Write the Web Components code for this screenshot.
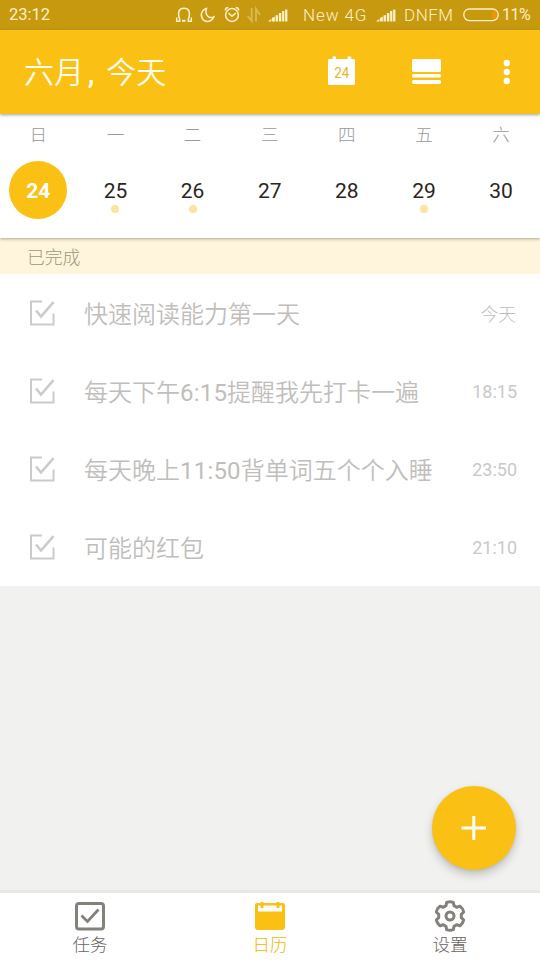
<!DOCTYPE html>
<html lang="zh-CN">
<head>
<meta charset="utf-8">
<title>日历</title>
<style>
html,body{margin:0;height:100%}
body{font-family:Roboto,"Noto Sans CJK SC",sans-serif;font-weight:350}
</style>
</head>
<body>
<calendar-app></calendar-app>
<script>
function define(name, html, fill) {
  customElements.define(name, class extends HTMLElement {
    connectedCallback() {
      if (this.shadowRoot) return;
      const root = this.attachShadow({ mode: 'open' });
      root.innerHTML = html;
      if (fill) fill(root, this);
    }
  });
}

define('signal-bars', `<style>:host{display:block;width:20px;height:14px;line-height:0}svg{display:block}</style><svg width="20" height="14" viewBox="0 0 20 14" fill="#fff0c8"><path d="M0 13.500L3.300 10.800V13.500z"/><path d="M4 13.500V10l2.800-1.500V13.500z"/><path d="M7.600 13.500V7.200h2.400V13.500z"/><path d="M10.900 13.500V5h2.400V13.500z"/><path d="M14.100 13.500V3h2.200V13.500z"/><path d="M17.100 13.500V1.500h2.300V13.500z"/></svg>`);

define('status-bar', `<style>
:host{display:flex;height:30px;background:#c6990f;color:#fff0c8;font-size:16.5px;font-weight:400;align-items:center;padding-left:9px;box-sizing:border-box;white-space:nowrap;line-height:32px}
span{display:block;flex:none}svg,signal-bars{display:block;flex:none}
.time{width:166px;letter-spacing:0;line-height:34px}.net{width:74px;margin-left:15px;font-size:17px;letter-spacing:.9px;font-weight:350}.op{width:59px;margin-left:8px;font-size:17px;letter-spacing:.5px;font-weight:350}.pct{font-size:16px;letter-spacing:-.5px;margin-left:3px;line-height:34px}
</style>
<span class="time">23:12</span>
<svg width="88" height="30" viewBox="175 0 88 30" fill="none" stroke="#fff0c8" stroke-width="1.5">
<path d="M179.300 18.500C177.500 12 179 8.200 184 8.200s6.500 3.800 4.700 10.300"/><path d="M176.700 17.500v3.800h3v-3M191.300 17.500v3.800h-3v-3"/><path d="M182 20.800h3.500" stroke-width="2"/>
<path d="M206.500 8.500C201 10 200 16 203 19.500 206.500 23 212 21.500 213.800 17 209 19 204.500 15 206.500 8.500z"/>
<circle cx="232" cy="15" r="6.400"/><path d="M228.500 13l3.500 3.200 4-3.200M225.300 10.500c0-2 1.400-3 3-3M238.700 10.500c0-2-1.400-3-3-3"/>
<g stroke="#dbb850" stroke-width="1.900"><path d="M251.700 8v13l-4-5M256 21.500V9l4 6"/></g></svg>
<signal-bars style="margin-left:5px"></signal-bars><span class="net">New 4G</span><signal-bars style="margin-left:-1px"></signal-bars><span class="op">DNFM</span>
<svg width="36" height="14" viewBox="0 0 36 14"><path d="M29 2h2.500Q34.500 2 34.500 7t-3 5H29z" fill="#e9960a"/><rect x=".8" y="1" width="34.400" height="11.600" rx="5.500" fill="none" stroke="#fff0c8" stroke-width="1.300"/></svg>
<span class="pct">11%</span>`);

define('app-header', `<style>
:host{display:flex;height:84px;background:#fac013;color:#fffdf0;position:relative;z-index:2;box-shadow:0 1px 3px rgba(70,90,110,.55);justify-content:space-between;padding:0 0 0 24px;box-sizing:border-box}
.title{display:flex;font-size:30px;line-height:86px;letter-spacing:-.1px}
.comma{width:22.500px;text-indent:4px;font-weight:500}
svg{display:block}
text{font:400 15px Roboto,sans-serif;fill:#e8b51d}
</style>
<div class="title"><span>六月</span><span class="comma">,</span><span>今天</span></div>
<svg width="240" height="84" viewBox="300 30 240 84" fill="#fff">
<path d="M329 59h3.500v-1.500q0-1.200 1.800-1.200t1.800 1.200V59h11.500v-1.500q0-1.200 1.800-1.200t1.800 1.200V59H354q1 0 1 1v24q0 1-1 1h-25q-1 0-1-1V60q0-1 1-1z"/><text x="341.800" y="78.200" text-anchor="middle" textLength="15" lengthAdjust="spacingAndGlyphs">24</text>
<rect x="412" y="59" width="29" height="13" rx="1.500"/><rect x="412" y="74" width="29" height="3.500" rx="1.500"/><rect x="412" y="80" width="29" height="4" rx="1.500"/>
<circle cx="506.800" cy="63" r="3.200"/><circle cx="506.800" cy="72" r="3.200"/><circle cx="506.800" cy="81" r="3.200"/></svg>`);

define('week-day', `<style>
:host{display:flex;flex-direction:column;align-items:center;width:77.140px;flex:none}
.name{font-size:17.500px;line-height:27px;height:26px;color:#999;font-weight:300}
.num{width:58px;height:58px;border-radius:50%;margin-top:13px;display:flex;flex-direction:column;align-items:center;color:#2b2520;font-size:21px;font-weight:400;line-height:61px;letter-spacing:-.1px}
:host([selected]) .num{background:#fac013;color:#fff;font-weight:700}
i{display:none;width:8px;height:8px;border-radius:50%;background:#fde3a0;margin-top:-14px}
:host([busy]) i{display:block}
</style><div class="name"><slot></slot></div><div class="num"></div><i></i>`,
(root, el) => { root.querySelector('.num').textContent = el.getAttribute('date'); });

define('week-strip', `<style>
:host{display:flex;height:124px;padding-top:8px;box-sizing:border-box;background:#fff;position:relative;z-index:1;box-shadow:0 1px 3px rgba(100,80,70,.5)}
.in{display:flex;width:540px;margin-left:-.3px}
</style><div class="in"><slot></slot></div>`);

define('section-head', `<style>:host{display:block;height:36px;background:#fef5dc;color:#a2957b;font-size:17.800px;line-height:40px;padding-left:27px;box-sizing:border-box;font-weight:300}</style><slot></slot>`);

define('task-row', `<style>
:host{display:flex;height:78px;align-items:center;background:#fff;color:#bfbebc;padding:0 23px 0 28px;font-size:24px}
svg{display:block;flex:none}.t{flex:1;padding-left:28px;line-height:78px;padding-top:3px;white-space:nowrap}
b{font-weight:400;letter-spacing:.2px}
.w{font-size:18px;color:#c9c9c9;padding-top:1px;font-weight:400}
.w.word{font-weight:300;color:#bdbdbd;font-size:17.800px;padding-right:1px;padding-top:0}
</style><svg width="28" height="28" viewBox="0 0 28 28" fill="none" stroke="#cbcbcb" stroke-width="2"><path d="M14 2.500H3V25.500h22.500V14.500"/><path d="M8 11.500l5 6L25.500 3.200" stroke-width="2.600"/></svg><span class="t"></span><span class="w"></span>`,
(root, el) => {
  const when = el.getAttribute('when');
  const w = root.querySelector('.w');
  w.textContent = when;
  w.classList.toggle('word', !/\d/.test(when));
  root.querySelector('.t').innerHTML = el.getAttribute('label').replace(/[\d:]+/g, '<b>$&</b>');
});

define('add-button', `<style>
:host{position:absolute;left:432px;top:786px;width:84px;height:84px;border-radius:50%;background:#fac013;box-shadow:0 5px 10px rgba(0,0,0,.2),0 1px 3px rgba(0,0,0,.08)}svg{display:block}
</style><svg width="84" height="84" stroke="#fff" stroke-width="3"><path d="M29.500 42h24.500M41.800 30v24"/></svg>`);

define('nav-item', `<style>
:host{display:flex;flex-direction:column;align-items:center;flex:1;color:#69645f;font-size:17.500px;font-weight:300;line-height:24px;padding-top:7px}
:host([active]){color:#f7b500}
svg{display:block;margin-bottom:1px}
</style><svg width="34" height="32" viewBox="0 0 34 32"></svg><slot></slot>`,
(root, el) => {
  const icons = {
    tasks: '<g fill="none" stroke="#84807b" stroke-width="3"><rect x="3.500" y="3.500" width="27" height="25.500" rx="2.500"/><path d="M8.500 15.500l6 6L25.500 9.500" stroke-width="2.800"/></g>',
    calendar: '<path d="M4 3h3.500V2h3v1h13V2h3v1H30q2 0 2 2v22q0 3-3 3H5q-3 0-3-3V5q0-2 2-2z" fill="#fac013"/><path d="M5 5.500h2.500V8h3V5.500h13V8h3V5.500H29V11.500H5z" fill="#fff"/>',
    settings: '<g fill="none" stroke="#84807b" stroke-width="3" stroke-linejoin="round"><path d="M13.700 2.300Q17 1 20.300 2.300L21 5.600 23.700 7.200 27 6.200Q30 8.600 30.700 12L28.300 14.300V17.700L30.700 20Q30 23.400 27 25.800L23.700 24.800 21 26.400 20.300 29.700Q17 31 13.700 29.700L13 26.400 10.300 24.800 7 25.800Q4 23.400 3.300 20L5.700 17.700V14.300L3.300 12Q4 8.600 7 6.200L10.300 7.200 13 5.600z"/><circle cx="17" cy="16" r="4"/></g>'
  };
  root.querySelector('svg').innerHTML = icons[el.getAttribute('icon')];
});

define('bottom-nav', `<style>:host{display:flex;height:70px;background:#fff;border-top:3px solid #e8e8e5;box-sizing:border-box}</style><slot></slot>`);

define('calendar-app', `<style>:host{display:flex;flex-direction:column;width:540px;height:960px;background:#f1f1ef;position:relative;overflow:hidden}
main{flex:1}status-bar,app-header,week-strip,bottom-nav{flex:none}</style>
<status-bar></status-bar><app-header></app-header>
<week-strip><week-day date="24" selected>日</week-day><week-day date="25" busy>一</week-day><week-day date="26" busy>二</week-day><week-day date="27">三</week-day><week-day date="28">四</week-day><week-day date="29" busy>五</week-day><week-day date="30">六</week-day></week-strip>
<main><section-head>已完成</section-head>
<task-row when="今天" label="快速阅读能力第一天"></task-row><task-row when="18:15" label="每天下午6:15提醒我先打卡一遍"></task-row><task-row when="23:50" label="每天晚上11:50背单词五个个入睡"></task-row><task-row when="21:10" label="可能的红包"></task-row></main>
<bottom-nav><nav-item icon="tasks">任务</nav-item><nav-item icon="calendar" active>日历</nav-item><nav-item icon="settings">设置</nav-item></bottom-nav>
<add-button></add-button>`);
</script>
</body>
</html>
